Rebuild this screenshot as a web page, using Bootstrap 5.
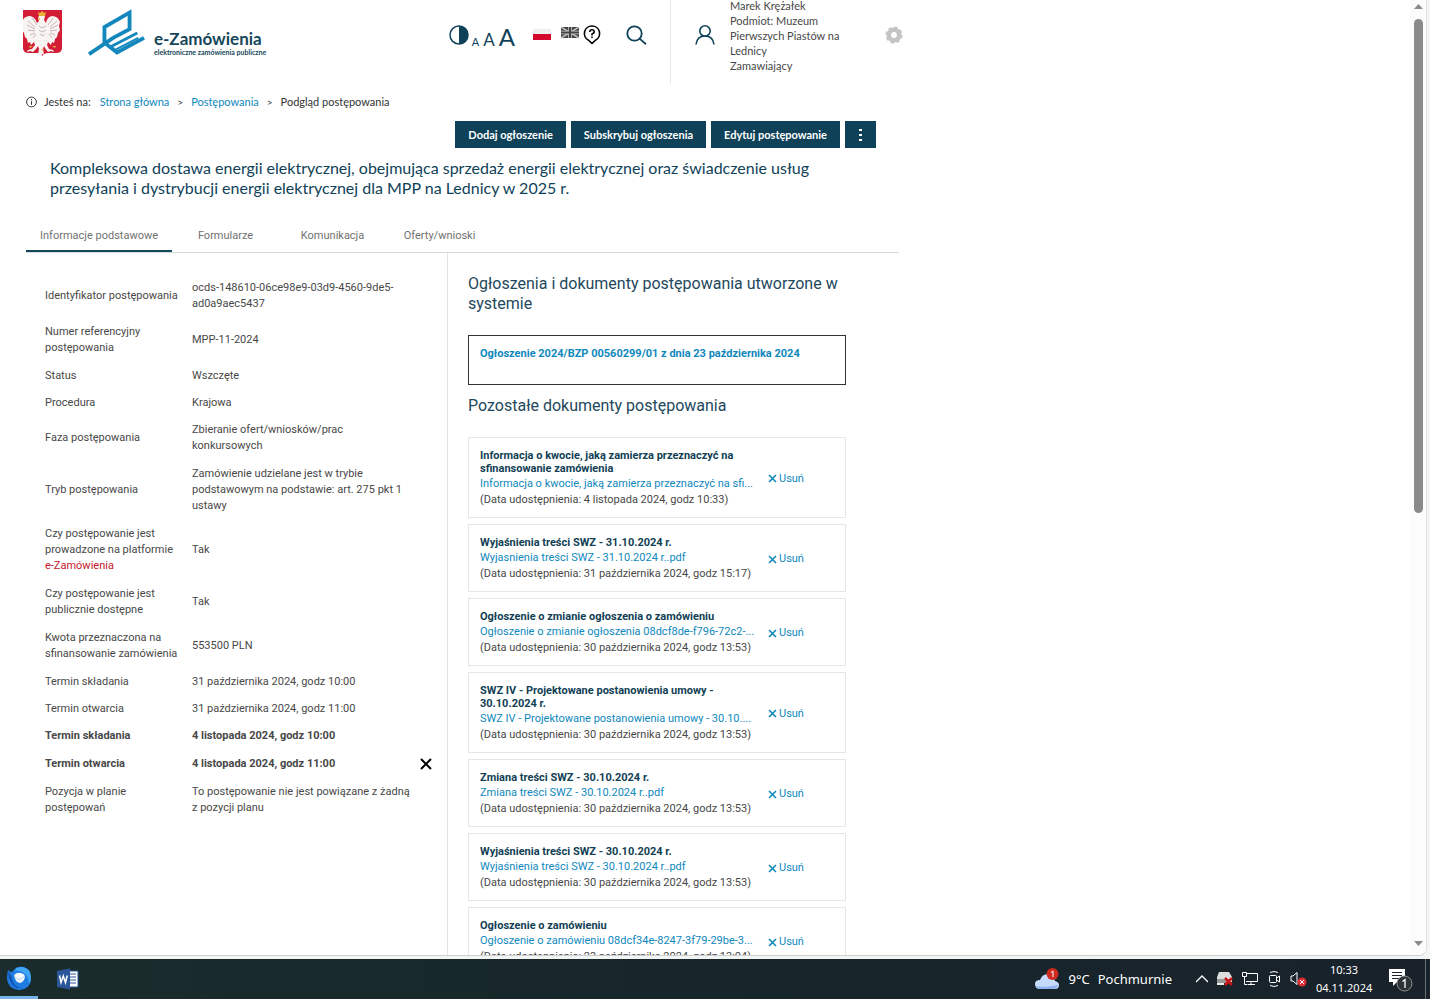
<!DOCTYPE html>
<html lang="pl">
<head>
<meta charset="utf-8">
<meta name="viewport" content="width=device-width, initial-scale=1">
<title>e-Zamówienia – Podgląd postępowania</title>
<link href="https://cdn.jsdelivr.net/npm/bootstrap@5.3.0/dist/css/bootstrap.min.css" rel="stylesheet">
<style>
  :root { --navy: #0f4259; --blue: #0f88bd; --ink: #484848; }
  body { font-family: Roboto, sans-serif; font-size: 11px; line-height: 16px; color: var(--ink); background: #f3f5f4; }
  a { color: var(--blue); text-decoration: none; }
  svg { display: block; flex: none; }
  .lato { font-family: Lato, sans-serif; }
  .window { background: #fff; border-right: 1px solid #dcdedd; border-bottom: 1px solid #ccd0ce; border-bottom-right-radius: 8px; margin: 0 3px 3px 0; min-height: 0; }
  .page { max-width: 912px; }
  .icon-btn { border: 0; padding: 0; background: none; color: var(--navy); line-height: 1; }

  .site-head { height: 84px; padding: 0 9px 14px 23px; }
  .brand-box { gap: 26px; margin-bottom: 4px; }
  .brand-name { font-size: 17px; font-weight: 700; line-height: 18px; color: #16465a; }
  .brand-sub { font-size: 7px; font-weight: 700; line-height: 9px; color: #16465a; }
  .brand-text { padding-top: 20px; margin-left: -18px; }
  .tools { margin-right: 23px; }
  .sizes { gap: 4px; margin: 0 18px 0 3px; height: 20px; }
  .size-s { font-size: 11px; }
  .size-m { font-size: 17px; }
  .size-l { font-size: 24px; }
  .lang-en { margin-left: 10px; }
  .user-box { border-left: 1px solid #e4e6e7; height: 84px; margin-bottom: -14px; padding: 0 0 14px 24px; width: 233px; }
  .user-text { line-height: 15px; width: 112px; margin-left: 15px; }

  .crumbs { padding: 10px 0 0 26px; gap: 9px; color: #333; }
  .crumbs .lead-in { gap: 7px; }
  .crumbs .sep { font-size: 10px; margin: 0 -1px; }
  .action-row { padding: 11px 36px 0 0; gap: 5px; }
  .btn-navy { background: var(--navy); color: #fff; border: 0; border-radius: 0; font-size: 11px; font-weight: 700; line-height: 17px; padding: 5px 13px; }
  .btn-navy:hover { background: #1b5670; color: #fff; }
  .btn-more { padding: 5px 14px; }
  .main-title { font-size: 16px; line-height: 20px; color: var(--navy); margin: 10px 50px 0 50px; font-weight: 400; }
  .tabs-row { margin: 20px 13px 0 26px; border-bottom: 1px solid #d5dadb; }
  .tab-btn { border: 0; background: none; min-width: 107px; height: 34px; padding: 3px 14px 0; color: #717171; border-bottom: 2px solid transparent; }
  .tab-btn.active { border-color: #12485a; }

  .details { width: 422px; margin-left: 26px; border-right: 1px solid #e2e4e5; padding: 21px 0 0 19px; flex: none; }
  .facts td, .facts th { font-weight: inherit; padding: 6px 0; vertical-align: middle; }
  .facts .one td, .facts .one th { padding-bottom: 5px; }
  .facts th { width: 147px; padding-right: 14px; }
  .facts td:nth-child(2) { width: 220px; }
  .facts .strong { font-weight: 700; }
  .brand-red { color: #c5162e; }
  .docs { padding: 21px 66px 0 20px; min-width: 0; }
  .docs h2 { font-size: 16px; line-height: 20px; color: #1e485c; margin: 0; font-weight: 400; }
  .notice { border: 1px solid #333; height: 50px; padding: 10px 11px; margin: 21px 0 11px; font-weight: 700; }
  .doc-list { margin-top: 21px; gap: 6px; }
  .doc { border: 1px solid #e4e6e7; padding: 11px 11px 9px; }
  .doc h3 { font-size: 11px; line-height: 13px; font-weight: 700; color: #123f55; margin: 0 0 1px; }
  .doc-body { width: 264px; white-space: nowrap; flex: none; }
  .doc-body h3 { white-space: normal; }
  .doc .icon-btn { color: var(--blue); margin-left: 24px; gap: 2px; line-height: 16px; }

  .track { width: 16px; background: #fcfcfc; padding: 3px 0 8px; }
  .thumb { width: 9px; height: 494px; border-radius: 5px; background: #8a8a8a; margin-top: 9px; }

  .taskbar { height: 40px; background: linear-gradient(90deg, #1b2c2d, #16262a 45%, #19222b); color: #fff; font-family: "Noto Sans", sans-serif; }
  .app { height: 40px; border-bottom: 3px solid transparent; width: 38px; padding-left: 7px; margin-right: 18px; }
  .app.running { border-color: #76b3e8; }
  .weather { font-size: 13px; }
  .clock { font-size: 11px; line-height: 18px; width: 56px; margin-left: 9px; }
  .tray { gap: 8px; }
  .show-desk { width: 5px; height: 40px; border-left: 1px solid #66716f; margin-left: 12px; }
</style>
</head>
<body class="d-flex flex-column vh-100 overflow-hidden">

<div class="window flex-grow-1 d-flex overflow-hidden">
  <div class="flex-grow-1 overflow-hidden">
    <div class="page">
      <header class="site-head lato d-flex align-items-center">
        <div class="brand-box d-flex align-items-center">
          <svg width="39" height="46" viewBox="0 0 39 46" role="img" aria-label="Godło Polski">
            <path d="M0 0h39v38q0 5-6 5h-8q-4 0-5.500 3q-1.500-3-5.500-3H6q-6 0-6-5z" fill="#d31d37"/>
            <path d="M16 11Q14 7 17 5q3-2 5 1l-1 4 2 3q1-6 6-7 6 0 8 6l-1 4 1 4-2 3-1 4-2 2-1 4-2-1-1 3-3-3-1 3 2 4 4 1 1 2-3-1-3 1-3-4-1-2-1 3 1 6-2-1-1 2-1-2-2 1 1-6-1-3-2 3-3 3-3-1-3 1 1-2 4-1 3-4-1-3-3 3-1-3-2 1-1-4-2-2-1-4-2-3 1-4-1-4q2-6 8-6 5 1 7 7z" fill="#f7f4f2"/>
            <path d="M5 11l7 6M4 15l8 4M5 20l7 1M7 25l5-2M10 28l3-4M34 11l-7 6M35 15l-8 4M34 20l-7 1M32 25l-5-2M29 28l-3-4M9 8l5 7M30 8l-5 7M16 16l3 2 4-2M16 20l3 2 4-2M17 24l3 2 2-2" stroke="#bfa3a6" stroke-width=".8" fill="none"/>
            <path d="M15 2l2 1 2-2 2 2 2-1-1 4h-6zM15 8l2 0-1 3zM6 36l4 0-3 2zM33 36l-4 0 3 2zM18 39h3l-1 2z" fill="#e6b23a"/>
          </svg>
          <svg width="58" height="48" viewBox="0 0 60 48" fill="none" stroke="#1487bd" aria-hidden="true">
            <path d="M1 46L26 29L43 20V3L17 18V34L30 44L58 29" stroke-width="4"/>
            <path d="M24 38L51 24" stroke-width="3"/><path d="M29 41L52 29" stroke-width="2"/>
          </svg>
          <div class="brand-text">
            <div class="brand-name">e-Zamówienia</div>
            <div class="brand-sub">elektroniczne zamówienia publiczne</div>
          </div>
        </div>
        <div class="tools d-flex align-items-center ms-auto">
          <button class="icon-btn" aria-label="Kontrast"><svg width="20" height="20" viewBox="0 0 20 20"><circle cx="10" cy="10" r="9" fill="none" stroke="currentColor" stroke-width="1.500"/><path d="M10 1a9 9 0 0 1 0 18z" fill="currentColor"/></svg></button>
          <div class="sizes d-flex align-items-baseline">
            <button class="icon-btn size-s">A</button>
            <button class="icon-btn size-m">A</button>
            <button class="icon-btn size-l">A</button>
          </div>
          <button class="icon-btn" aria-label="Polski"><svg width="18" height="13" viewBox="0 0 18 13"><path d="M0 0h18v6H0z" fill="#eee"/><path d="M0 5h18v6H0z" fill="#d4082d"/></svg></button>
          <button class="icon-btn lang-en" aria-label="English"><svg width="18" height="16" viewBox="0 0 18 16"><path d="M0 0h18v11H0z" fill="#444"/><path d="M0 0l18 11M18 0L0 11" stroke="#bbb" stroke-width="1.500"/><path d="M9 0v11M0 5.500h18" stroke="#ccc" stroke-width="3.500"/><path d="M9 0v11M0 5.500h18" stroke="#444" stroke-width="2"/></svg></button>
          <button class="icon-btn ms-1" aria-label="Pomoc"><svg width="18" height="20" viewBox="0 0 18 20"><path d="M9 1a7.500 7.500 0 0 1 3.500 14.200L9 18.500l-3.500-3.300A7.500 7.500 0 0 1 9 1z" fill="none" stroke="#000" stroke-width="1.600"/><path d="M6.800 7q0-2.200 2.200-2.200T11.200 7Q11 8.200 9 9v1.500M9 11.500v1.600" fill="none" stroke="#000" stroke-width="1.600"/></svg></button>
          <button class="icon-btn ms-4" aria-label="Szukaj"><svg width="22" height="20" viewBox="0 0 22 20" fill="none" stroke="currentColor" stroke-width="1.800"><circle cx="9.500" cy="8.500" r="7.200"/><path d="M14.600 13.600L21 19.200"/></svg></button>
        </div>
        <div class="user-box d-flex align-items-center">
          <svg width="20" height="20" viewBox="0 0 20 20" fill="none" stroke="#0f4259" stroke-width="1.600" aria-hidden="true"><circle cx="10" cy="6" r="5.200"/><path d="M1 19.500q1-8.500 9-8.500t9 8.500"/></svg>
          <div class="user-text">Marek Krężałek<br>Podmiot: Muzeum Pierwszych Piastów na Lednicy<br>Zamawiający</div>
          <button class="icon-btn ms-auto" aria-label="Ustawienia"><svg width="18" height="18" viewBox="0 0 18 18"><circle cx="9" cy="9" r="5.200" fill="none" stroke="#c3c4c5" stroke-width="4.600"/><circle cx="9" cy="9" r="7.500" fill="none" stroke="#c3c4c5" stroke-width="2" stroke-dasharray="3.300 2.590"/></svg></button>
        </div>
      </header>

      <nav class="crumbs lato d-flex align-items-center" aria-label="Ścieżka">
        <span class="lead-in d-flex align-items-center"><svg width="11" height="12" viewBox="0 0 11 12" fill="none" stroke="#333"><circle cx="5.500" cy="6" r="4.900"/><path d="M5.500 5.200v3.600M5.500 3v1.200"/></svg>Jesteś na:</span>
        <a href="#">Strona główna</a><span class="sep">&gt;</span>
        <a href="#">Postępowania</a><span class="sep">&gt;</span>
        <span>Podgląd postępowania</span>
      </nav>

      <div class="action-row lato d-flex justify-content-end">
        <button class="btn btn-navy">Dodaj ogłoszenie</button>
        <button class="btn btn-navy">Subskrybuj ogłoszenia</button>
        <button class="btn btn-navy">Edytuj postępowanie</button>
        <button class="btn btn-navy btn-more" aria-label="Więcej"><svg width="3" height="12" viewBox="0 0 3 12" fill="#fff"><path d="M0 0h3v2H0zM0 5h3v2H0zM0 10h3v2H0z"/></svg></button>
      </div>
      <h1 class="main-title lato">Kompleksowa dostawa energii elektrycznej, obejmująca sprzedaż energii elektrycznej oraz świadczenie usług przesyłania i dystrybucji energii elektrycznej dla MPP na Lednicy w 2025 r.</h1>

      <div class="tabs-row d-flex" role="tablist">
        <button class="tab-btn active" role="tab">Informacje podstawowe</button>
        <button class="tab-btn" role="tab">Formularze</button>
        <button class="tab-btn" role="tab">Komunikacja</button>
        <button class="tab-btn" role="tab">Oferty/wnioski</button>
      </div>

      <div class="d-flex">
        <section class="details">
          <table class="facts">
            <tr><th>Identyfikator postępowania</th><td>ocds-148610-06ce98e9-03d9-4560-9de5-ad0a9aec5437</td><td></td></tr>
            <tr><th>Numer referencyjny postępowania</th><td>MPP-11-2024</td></tr>
            <tr class="one"><th>Status</th><td>Wszczęte</td></tr>
            <tr class="one"><th>Procedura</th><td>Krajowa</td></tr>
            <tr><th>Faza postępowania</th><td>Zbieranie ofert/wniosków/prac<br>konkursowych</td></tr>
            <tr><th>Tryb postępowania</th><td>Zamówienie udzielane jest w trybie podstawowym na podstawie: art. 275 pkt 1 ustawy</td></tr>
            <tr><th>Czy postępowanie jest prowadzone na platformie <span class="brand-red">e-Zamówienia</span></th><td>Tak</td></tr>
            <tr><th>Czy postępowanie jest publicznie dostępne</th><td>Tak</td></tr>
            <tr><th>Kwota przeznaczona na sfinansowanie zamówienia</th><td>553500 PLN</td></tr>
            <tr class="one"><th>Termin składania</th><td>31 października 2024, godz 10:00</td></tr>
            <tr class="one"><th>Termin otwarcia</th><td>31 października 2024, godz 11:00</td></tr>
            <tr class="strong"><th>Termin składania</th><td>4 listopada 2024, godz 10:00</td></tr>
            <tr class="strong"><th>Termin otwarcia</th><td>4 listopada 2024, godz 11:00</td><td><button class="icon-btn d-block ms-2" aria-label="Usuń termin"><svg width="12" height="12" viewBox="0 0 12 12" stroke="#000" stroke-width="2"><path d="M1 1l10 10M11 1L1 11"/></svg></button></td></tr>
            <tr><th>Pozycja w planie postępowań</th><td>To postępowanie nie jest powiązane z żadną z pozycji planu</td></tr>
          </table>
        </section>

        <section class="docs flex-grow-1">
          <h2>Ogłoszenia i dokumenty postępowania utworzone w systemie</h2>
          <div class="notice"><a href="#">Ogłoszenie 2024/BZP 00560299/01 z dnia 23 października 2024</a></div>
          <h2>Pozostałe dokumenty postępowania</h2>
          <div class="doc-list d-flex flex-column">
            <article class="doc d-flex align-items-center"><div class="doc-body"><h3>Informacja o kwocie, jaką zamierza przeznaczyć na sfinansowanie zamówienia</h3><a href="#">Informacja o kwocie, jaką zamierza przeznaczyć na sfi...</a><div>(Data udostępnienia: 4 listopada 2024, godz 10:33)</div></div><button class="icon-btn d-flex align-items-center"><svg width="9" height="9" viewBox="0 0 9 9" stroke="currentColor" stroke-width="1.600"><path d="M1 1l7 7M8 1L1 8"/></svg>Usuń</button></article>
            <article class="doc d-flex align-items-center"><div class="doc-body"><h3>Wyjaśnienia treści SWZ - 31.10.2024 r.</h3><a href="#">Wyjasnienia treści SWZ - 31.10.2024 r..pdf</a><div>(Data udostępnienia: 31 października 2024, godz 15:17)</div></div><button class="icon-btn d-flex align-items-center"><svg width="9" height="9" viewBox="0 0 9 9" stroke="currentColor" stroke-width="1.600"><path d="M1 1l7 7M8 1L1 8"/></svg>Usuń</button></article>
            <article class="doc d-flex align-items-center"><div class="doc-body"><h3>Ogłoszenie o zmianie ogłoszenia o zamówieniu</h3><a href="#">Ogłoszenie o zmianie ogłoszenia 08dcf8de-f796-72c2-...</a><div>(Data udostępnienia: 30 października 2024, godz 13:53)</div></div><button class="icon-btn d-flex align-items-center"><svg width="9" height="9" viewBox="0 0 9 9" stroke="currentColor" stroke-width="1.600"><path d="M1 1l7 7M8 1L1 8"/></svg>Usuń</button></article>
            <article class="doc d-flex align-items-center"><div class="doc-body"><h3>SWZ IV - Projektowane postanowienia umowy - 30.10.2024 r.</h3><a href="#">SWZ IV - Projektowane postanowienia umowy - 30.10....</a><div>(Data udostępnienia: 30 października 2024, godz 13:53)</div></div><button class="icon-btn d-flex align-items-center"><svg width="9" height="9" viewBox="0 0 9 9" stroke="currentColor" stroke-width="1.600"><path d="M1 1l7 7M8 1L1 8"/></svg>Usuń</button></article>
            <article class="doc d-flex align-items-center"><div class="doc-body"><h3>Zmiana treści SWZ - 30.10.2024 r.</h3><a href="#">Zmiana treści SWZ - 30.10.2024 r..pdf</a><div>(Data udostępnienia: 30 października 2024, godz 13:53)</div></div><button class="icon-btn d-flex align-items-center"><svg width="9" height="9" viewBox="0 0 9 9" stroke="currentColor" stroke-width="1.600"><path d="M1 1l7 7M8 1L1 8"/></svg>Usuń</button></article>
            <article class="doc d-flex align-items-center"><div class="doc-body"><h3>Wyjaśnienia treści SWZ - 30.10.2024 r.</h3><a href="#">Wyjaśnienia treści SWZ - 30.10.2024 r..pdf</a><div>(Data udostępnienia: 30 października 2024, godz 13:53)</div></div><button class="icon-btn d-flex align-items-center"><svg width="9" height="9" viewBox="0 0 9 9" stroke="currentColor" stroke-width="1.600"><path d="M1 1l7 7M8 1L1 8"/></svg>Usuń</button></article>
            <article class="doc d-flex align-items-center"><div class="doc-body"><h3>Ogłoszenie o zamówieniu</h3><a href="#">Ogłoszenie o zamówieniu 08dcf34e-8247-3f79-29be-3...</a><div>(Data udostępnienia: 23 października 2024, godz 13:04)</div></div><button class="icon-btn d-flex align-items-center"><svg width="9" height="9" viewBox="0 0 9 9" stroke="currentColor" stroke-width="1.600"><path d="M1 1l7 7M8 1L1 8"/></svg>Usuń</button></article>
          </div>
        </section>
      </div>
    </div>
  </div>
  <div class="track d-flex flex-column align-items-center" aria-hidden="true">
    <svg width="9" height="7" viewBox="0 0 9 7"><path d="M0 6L4.500 1L9 6z" fill="#8a8a8a"/></svg>
    <div class="thumb"></div>
    <svg class="mt-auto" width="9" height="7" viewBox="0 0 9 7"><path d="M0 1L4.500 6L9 1z" fill="#8a8a8a"/></svg>
  </div>
</div>

<footer class="taskbar d-flex align-items-center">
  <button class="icon-btn app running" aria-label="Thunderbird"><svg width="24" height="24" viewBox="0 0 24 24"><path d="M1 4q2 2 4 2 4-6 12-5l5 3 2 8q0 11-12 12Q1 23 0 13q0-5 1-9z" fill="#1f7ce0"/><path d="M9 2q9-3 14 4 2 7-1 12 0-7-4-10-4-4-10-3z" fill="#3fa5f5"/><path d="M1 5q0 12 8 17l8 0Q6 22 5 11z" fill="#1457b8"/><path d="M7 9q3-3 7-2 4 1 4 4-1 5-5 6-5-1-6-8z" fill="#f3f8fd"/><path d="M7 10l5 4 6-4" fill="none" stroke="#b5cfe8"/></svg></button>
  <button class="icon-btn" aria-label="Word"><svg width="24" height="22" viewBox="0 0 24 22"><path d="M12 3h10v16H12z" fill="#fff" stroke="#2b579a"/><path d="M13 6h7M13 9h7M13 12h7M13 15h7" stroke="#2b579a"/><path d="M1 3l13-2.500v21L1 19z" fill="#2b579a"/><path d="M3.500 7.500l1.500 7 2.300-6.500 2.200 6.500L11.300 7.500" fill="none" stroke="#fff" stroke-width="1.500"/></svg></button>
  <div class="weather d-flex align-items-center ms-auto">
    <svg class="me-2" width="26" height="24" viewBox="0 0 26 24"><path d="M6 22q-5 0-5-5 0-4 5-4 2-6 8-6 6 1 7 7 4 1 4 4 0 4-4 4z" fill="#c6dafa"/><path d="M2 19q8 2 22-1-1 4-4 4H6q-3 0-4-3z" fill="#92b3ee"/><circle cx="18.500" cy="7" r="6" fill="#cf2b20"/><path d="M17 5.500l2-1.500v6" fill="none" stroke="#fff"/></svg>
    <span>9°C</span><span class="ms-2">Pochmurnie</span>
  </div>
  <div class="tray d-flex align-items-center ms-4">
    <svg width="12" height="12" viewBox="0 0 12 12" fill="none" stroke="#fff" stroke-width="1.300"><path d="M0 9l6-6 6 6"/></svg>
    <svg width="18" height="16" viewBox="0 0 18 16"><path d="M3 1h10l3 5v5H1V6z" fill="#ddd"/><path d="M1 8h12v4H1z" fill="#999"/><path d="M1 12h7v2H1z" fill="#eee"/><path d="M9 7l7 7M16 7l-7 7" stroke="#c91616" stroke-width="2.500"/></svg>
    <svg width="16" height="16" viewBox="0 0 16 16" fill="none" stroke="#fff"><path d="M4 2.500h11.500v8H4M9 10.500v3M6 13.500h7M.5 1.500h4v4h-4zM2.500 5.500v8h3"/></svg>
    <svg width="16" height="18" viewBox="0 0 16 18" fill="none" stroke="#fff"><rect x="3.500" y="5.500" width="7" height="7" rx="1"/><path d="M10.500 8l3-2v6l-3-2M4 2.500q4-2 8 0M4 15.500q4 2 8 0"/></svg>
    <svg width="17" height="16" viewBox="0 0 17 16"><path d="M1 5h2l4-3.500v12L3 10H1z" fill="none" stroke="#fff"/><circle cx="12" cy="11" r="4.500" fill="#d92c35"/><path d="M10 9l4 4M14 9l-4 4" stroke="#fff"/></svg>
  </div>
  <div class="clock text-center">10:33<br>04.11.2024</div>
  <button class="icon-btn ms-3" aria-label="Powiadomienia"><svg width="25" height="26" viewBox="0 0 25 26"><path d="M1 3h16v13H9l-4 4v-4H1z" fill="#fff"/><path d="M4 6.500h10M4 9.500h10M4 12.500h7" stroke="#1a2529"/><circle cx="16.500" cy="17.500" r="7.500" fill="#2c3337" stroke="#8b9194"/><path d="M14.500 15.500l2.500-2v8.500" fill="none" stroke="#fff" stroke-width="1.300"/></svg></button>
  <div class="show-desk"></div>
</footer>
<script src="https://cdn.jsdelivr.net/npm/bootstrap@5.3.0/dist/js/bootstrap.bundle.min.js"></script>
</body>
</html>
